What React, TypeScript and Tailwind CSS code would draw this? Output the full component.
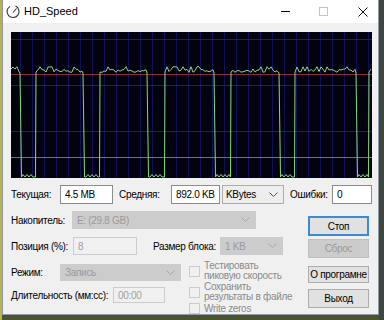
import React from "react";

// drop / rise x positions of the write-speed trace, in graph coords
const EDGES: [number, number][] = [
  [9, 25],
  [72, 89],
  [136, 154],
  [203, 220],
  [268, 284],
  [345, 358],
];

const GRAPH_W = 361;
const GRAPH_H = 146;

function noise(i: number) {
  const s = Math.sin(i * 12.9898 + 4.1414) * 43758.5453;
  return s - Math.floor(s);
}

function buildTrace() {
  const pts: string[] = [];
  let x = 0;
  let k = 0;
  const high = (from: number, to: number) => {
    for (let px = from; px < to; px += 2) {
      const n = noise(k++);
      const y = n > 0.85 ? 33 + n * 2 : 37 + n * 4;
      pts.push(`${px},${y.toFixed(1)}`);
    }
  };
  const low = (from: number, to: number) => {
    for (let px = from; px <= to; px += 2) {
      const y = k++ % 2 === 0 ? 145 : 142.5;
      pts.push(`${px},${y}`);
    }
  };
  for (const [drop, rise] of EDGES) {
    high(x, drop);
    pts.push(`${drop},41`);
    pts.push(`${drop + 1.5},145`);
    low(drop + 3, rise - 2);
    pts.push(`${rise - 0.5},145`);
    pts.push(`${rise},40`);
    x = rise + 2;
  }
  high(x, GRAPH_W);
  return pts.join(" ");
}

const SpeedGraph = () => {
  const trace = buildTrace();
  const vLines = [];
  for (let gx = 9; gx < GRAPH_W; gx += 12) vLines.push(gx);
  return (
    <svg width={GRAPH_W} height={GRAPH_H} className="block">
      <rect width={GRAPH_W} height={GRAPH_H} fill="#03030f" />
      {vLines.map((gx) => (
        <line key={gx} x1={gx + 0.5} y1={0} x2={gx + 0.5} y2={GRAPH_H} stroke="#10105a" strokeWidth={1} />
      ))}
      {[7, 53, 99].map((gy) => (
        <line key={gy} x1={0} y1={gy + 0.5} x2={GRAPH_W} y2={gy + 0.5} stroke="#1c1c80" strokeWidth={1} />
      ))}
      <line x1={0} y1={42.5} x2={GRAPH_W} y2={42.5} stroke="#8a2a3a" strokeWidth={1} />
      <line x1={0} y1={125.5} x2={GRAPH_W} y2={125.5} stroke="#a054a0" strokeWidth={1} />
      <polyline points={trace} fill="none" stroke="#86d878" strokeWidth={1} />
    </svg>
  );
};

const Chevron = ({ color }: { color: string }) => (
  <svg width="9" height="6" viewBox="0 0 9 6" className="shrink-0">
    <path d="M0.5 0.5 L4.5 4.5 L8.5 0.5" fill="none" stroke={color} strokeWidth={1} />
  </svg>
);

const TextBox = ({ value, className }: { value: string; className: string }) => (
  <div className={`flex shrink-0 items-center whitespace-nowrap border border-[#8c8c8c] bg-white px-[4px] text-black ${className}`}>
    {value}
  </div>
);

const DisabledBox = ({ value, className }: { value: string; className: string }) => (
  <div className={`flex shrink-0 items-center border border-[#cccccc] bg-[#f0f0f0] px-[4px] text-[#a0a0a0] ${className}`}>
    {value}
  </div>
);

const DisabledSelect = ({ value, className }: { value: string; className: string }) => (
  <div className={`flex shrink-0 items-center justify-between whitespace-nowrap border border-[#cccccc] bg-[#cccccc] pl-[4px] pr-[5px] text-[#9a9a9a] ${className}`}>
    <span>{value}</span>
    <Chevron color="#a8a8a8" />
  </div>
);

const CheckItem = ({ lines }: { lines: string[] }) => (
  <div className="flex items-center gap-[4px]">
    <div className="h-[11px] w-[11px] shrink-0 border border-[#cccccc] bg-[#f0f0f0]" />
    <div className="whitespace-nowrap leading-[10px] text-[#8a8a8a]">
      {lines.map((l) => (
        <div key={l}>{l}</div>
      ))}
    </div>
  </div>
);

export default function App() {
  return (
    <div
      className="h-[320px] w-[384px] overflow-hidden bg-[#4a5330] text-[10px] tracking-[-0.3px]"
      style={{ fontFamily: '"Liberation Sans", Arial, sans-serif' }}
    >
      <div className="flex h-full">
        <div className="w-[2px] bg-[#b7b25a]" />
        <div className="h-[315px] w-[377px] border-x border-b border-[#8f98a4] bg-[#f0f0f0]">
          {/* title bar */}
          <div className="flex h-[23px] items-center bg-white">
            <svg width="16" height="16" viewBox="0 0 16 16" className="ml-[2px]">
              <path d="M5 2.4 A6 6 0 1 0 10.5 2.1" fill="none" stroke="#333" strokeWidth={1.1} />
              <line x1="8" y1="8.5" x2="11.5" y2="4.5" stroke="#333" strokeWidth={1.1} />
            </svg>
            <span className="ml-[3px] text-[11px] tracking-normal text-black">HD_Speed</span>
            <div className="ml-auto flex items-center">
              <div className="h-px w-[9px] bg-black" />
              <div className="ml-[29px] h-[9px] w-[9px] border border-[#c4c4c4]" />
              <svg width="10" height="10" viewBox="0 0 10 10" className="ml-[30px] mr-[10px]">
                <path d="M0.5 0.5 L9.5 9.5 M9.5 0.5 L0.5 9.5" stroke="#111" strokeWidth={1} />
              </svg>
            </div>
          </div>

          {/* graph */}
          <div className="ml-[8px] mt-[9px] w-[361px]">
            <SpeedGraph />
          </div>

          {/* speed row */}
          <div className="ml-[8px] mt-[7px] flex h-[19px] items-center whitespace-nowrap text-black">
            <span className="w-[49px] shrink-0">Текущая:</span>
            <TextBox value="4.5 MB" className="h-[19px] w-[53px]" />
            <span className="ml-[6px] w-[52px] shrink-0">Средняя:</span>
            <TextBox value="892.0 KB" className="h-[19px] w-[49px]" />
            <div className="ml-[2px] flex h-[19px] w-[62px] shrink-0 items-center justify-between border border-[#adadad] bg-[#eeeeee] pl-[3px] pr-[5px]">
              <span>KBytes</span>
              <Chevron color="#555" />
            </div>
            <span className="ml-[6px] w-[42px] shrink-0">Ошибки:</span>
            <TextBox value="0" className="h-[19px] w-[40px]" />
          </div>

          <div className="flex">
            {/* settings */}
            <div className="ml-[8px] w-[290px] whitespace-nowrap text-black">
              <div className="mt-[7px] flex h-[18px] items-center">
                <span className="w-[61px] shrink-0">Накопитель:</span>
                <DisabledSelect value="E: (29.8 GB)" className="h-[18px] w-[184px]" />
              </div>
              <div className="mt-[8px] flex h-[18px] items-center">
                <span className="w-[62px] shrink-0">Позиция (%):</span>
                <DisabledBox value="8" className="h-[18px] w-[64px]" />
                <span className="ml-[16px] w-[67px] shrink-0">Размер блока:</span>
                <DisabledSelect value="1 KB" className="h-[18px] w-[63px]" />
              </div>
              <div className="mt-[6px] flex">
                <div className="w-[178px] shrink-0">
                  <div className="mt-[3px] flex h-[17px] items-center">
                    <span className="w-[49px] shrink-0">Режим:</span>
                    <DisabledSelect value="Запись" className="h-[17px] w-[121px]" />
                  </div>
                  <div className="mt-[6px] flex h-[16px] items-center">
                    <span className="w-[102px] shrink-0">Длительность (мм:сс):</span>
                    <DisabledBox value="00:00" className="h-[16px] w-[52px]" />
                  </div>
                </div>
                <div className="flex flex-col gap-[1px]">
                  <CheckItem lines={["Тестировать", "пиковую скорость"]} />
                  <CheckItem lines={["Сохранить", "результаты в файле"]} />
                  <CheckItem lines={["Write zeros"]} />
                </div>
              </div>
            </div>

            {/* buttons */}
            <div className="ml-[7px] flex w-[61px] shrink-0 flex-col whitespace-nowrap">
              <button className="mt-[12px] h-[20px] border-2 border-[#3a8ad6] bg-[#e1e1e1] text-black">Стоп</button>
              <button className="mt-[3px] h-[19px] border border-[#bfbfbf] bg-[#cccccc] text-[#9a9a9a]">Сброс</button>
              <button className="mt-[8px] h-[17px] border border-[#adadad] bg-[#e1e1e1] text-black">О програмне</button>
              <button className="mt-[6px] h-[19px] border border-[#adadad] bg-[#e1e1e1] text-black">Выход</button>
            </div>
          </div>
        </div>
        <div className="flex-1 bg-[#3d4640]" />
      </div>
    </div>
  );
}
